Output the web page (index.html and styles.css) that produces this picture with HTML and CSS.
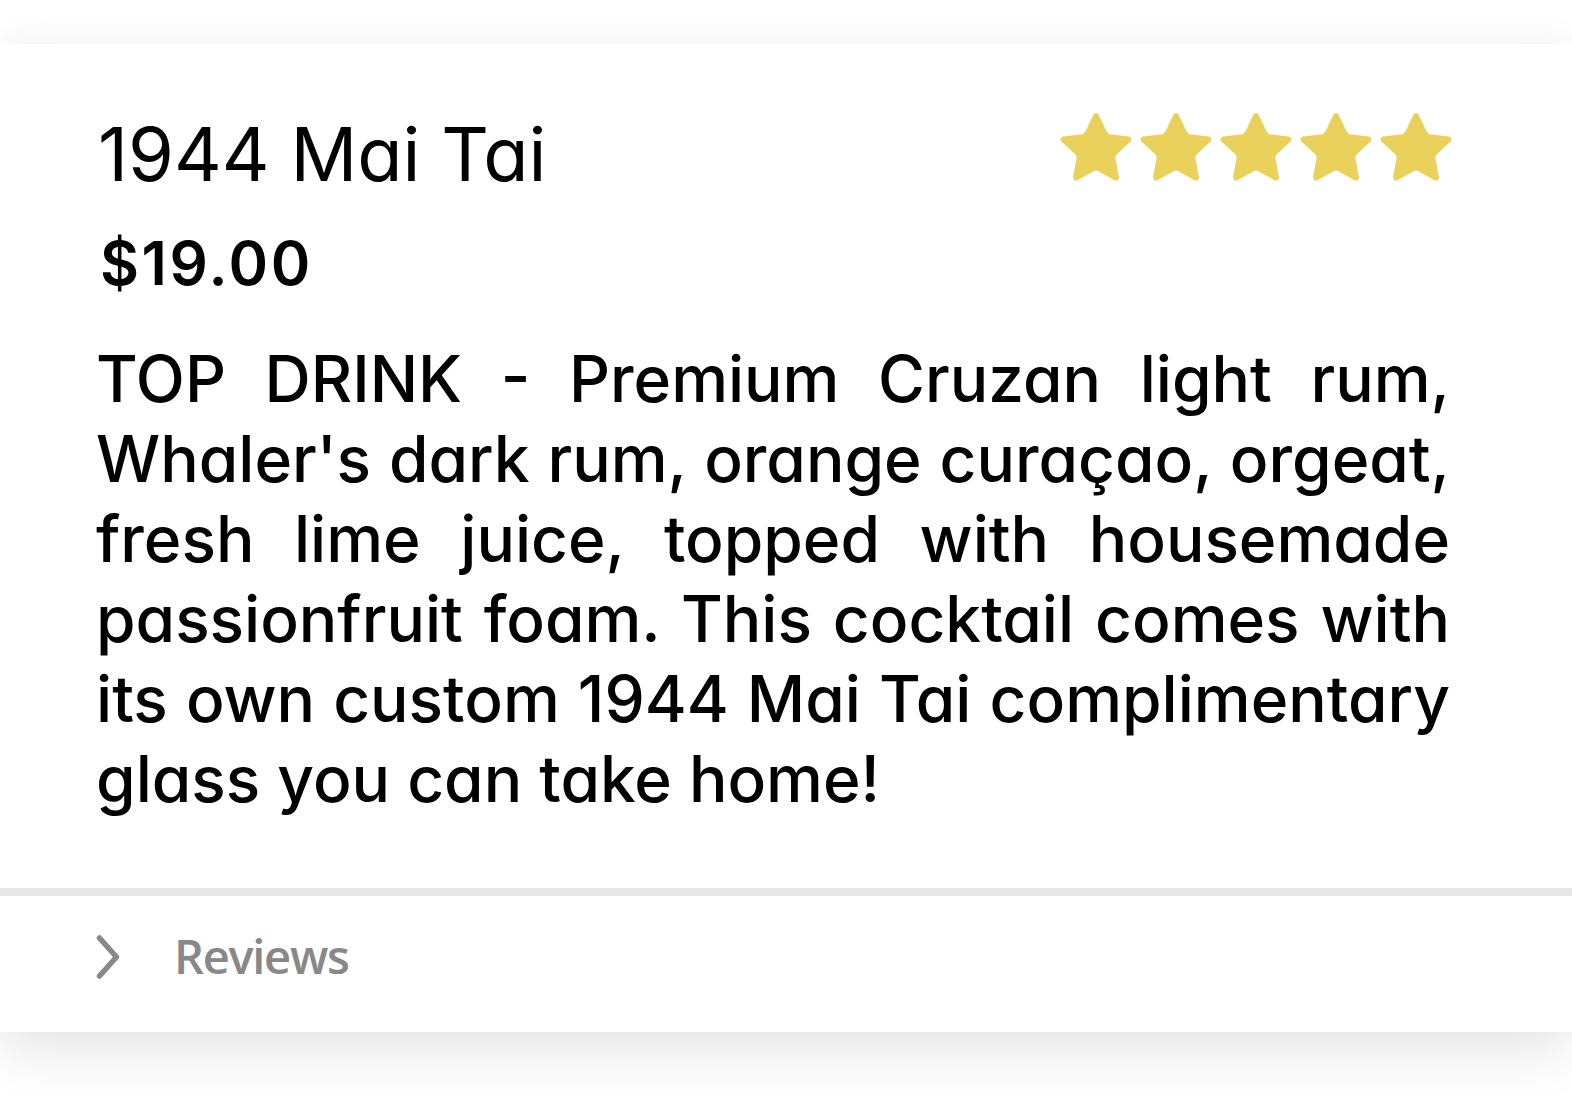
FILE: index.html
```html
<!DOCTYPE html>
<html lang="en">
<head>
<meta charset="utf-8">
<title>1944 Mai Tai</title>
<link rel="stylesheet" href="styles.css">
</head>
<body>
<div class="page">
  <article class="card">
    <div class="card-main">
      <div class="head">
        <h1 class="title">1944 Mai Tai</h1>
        <div class="stars" aria-label="5 out of 5 stars">
          <svg class="star" viewBox="0 0 72 68"><path d="M36 4L44 21.1Q45.7 24.7 49.7 25.2L68.3 27.5L54.6 40.4Q51.7 43.1 52.5 47L56 65.5L39.5 56.4Q36 54.5 32.5 56.4L16 65.5L19.5 47Q20.3 43.1 17.4 40.4L3.7 27.5L22.3 25.2Q26.3 24.7 28 21.1Z"/></svg>
          <svg class="star" viewBox="0 0 72 68"><path d="M36 4L44 21.1Q45.7 24.7 49.7 25.2L68.3 27.5L54.6 40.4Q51.7 43.1 52.5 47L56 65.5L39.5 56.4Q36 54.5 32.5 56.4L16 65.5L19.5 47Q20.3 43.1 17.4 40.4L3.7 27.5L22.3 25.2Q26.3 24.7 28 21.1Z"/></svg>
          <svg class="star" viewBox="0 0 72 68"><path d="M36 4L44 21.1Q45.7 24.7 49.7 25.2L68.3 27.5L54.6 40.4Q51.7 43.1 52.5 47L56 65.5L39.5 56.4Q36 54.5 32.5 56.4L16 65.5L19.5 47Q20.3 43.1 17.4 40.4L3.7 27.5L22.3 25.2Q26.3 24.7 28 21.1Z"/></svg>
          <svg class="star" viewBox="0 0 72 68"><path d="M36 4L44 21.1Q45.7 24.7 49.7 25.2L68.3 27.5L54.6 40.4Q51.7 43.1 52.5 47L56 65.5L39.5 56.4Q36 54.5 32.5 56.4L16 65.5L19.5 47Q20.3 43.1 17.4 40.4L3.7 27.5L22.3 25.2Q26.3 24.7 28 21.1Z"/></svg>
          <svg class="star" viewBox="0 0 72 68"><path d="M36 4L44 21.1Q45.7 24.7 49.7 25.2L68.3 27.5L54.6 40.4Q51.7 43.1 52.5 47L56 65.5L39.5 56.4Q36 54.5 32.5 56.4L16 65.5L19.5 47Q20.3 43.1 17.4 40.4L3.7 27.5L22.3 25.2Q26.3 24.7 28 21.1Z"/></svg>
        </div>
      </div>
      <div class="price">$19.00</div>
      <p class="desc">
        <span class="line">TOP DRINK - Premium Cruzan light rum,</span>
        <span class="line">Whaler's dark rum, orange curaçao, orgeat,</span>
        <span class="line">fresh lime juice, topped with housemade</span>
        <span class="line">passionfruit foam. This cocktail comes with</span>
        <span class="line">its own custom 1944 Mai Tai complimentary</span>
        <span class="line last">glass you can take home!</span>
      </p>
    </div>
    <div class="reviews">
      <svg class="chev" viewBox="0 0 24 44"><path d="M3.5 3 L20.5 22 L3.5 41"/></svg>
      <span class="reviews-label">Reviews</span>
    </div>
  </article>
</div>
</body>
</html>
```

FILE: styles.css
```css
html, body {
  margin: 0;
  padding: 0;
  background: #ffffff;
}

body {
  font-family: Inter, "Noto Sans", sans-serif;
  font-feature-settings: "cv11" 1;
  color: #000;
}

.page {
  padding-top: 44px;
  padding-bottom: 76px;
}

.card {
  background: #fff;
  box-shadow: 0 22px 50px rgba(0, 0, 0, 0.09), 0 -6px 40px rgba(0, 0, 0, 0.03);
}

.card-main {
  padding: 68px 122px 69px 96px;
}

.head {
  display: flex;
  justify-content: space-between;
  align-items: flex-start;
}

.title {
  margin: 0 0 0 2px;
  font-size: 74px;
  line-height: 84px;
  font-weight: 400;
  letter-spacing: 0;
}

.stars {
  display: flex;
  gap: 8px;
  margin-right: -2px;
}

.star {
  width: 72px;
  height: 68px;
  display: block;
  overflow: visible;
}

.star path {
  fill: #e9d15b;
  stroke: #e9d15b;
  stroke-width: 6;
  stroke-linejoin: round;
}

.price {
  margin: 32px 0 0 4px;
  font-size: 60px;
  line-height: 70px;
  font-weight: 600;
  letter-spacing: 2.5px;
}

.desc {
  margin: 41px 0 0;
  font-size: 64px;
  line-height: 80px;
  font-weight: 500;
}

.line {
  display: block;
  text-align: justify;
  text-align-last: justify;
  white-space: nowrap;
}

.line.last {
  text-align-last: left;
}

.reviews {
  border-top: 8px solid #e8e8e8;
  height: 136px;
  display: flex;
  align-items: center;
  padding-left: 96px;
}

.chev {
  width: 24px;
  height: 44px;
  display: block;
  margin-top: -14px;
}

.chev path {
  fill: none;
  stroke: #888;
  stroke-width: 5.5;
  stroke-linecap: round;
  stroke-linejoin: round;
}

.reviews-label {
  margin-left: 54px;
  font-family: "Open Sans", "Noto Sans", sans-serif;
  font-size: 47px;
  font-weight: 600;
  color: #888;
  letter-spacing: -1.3px;
  margin-top: -16px;
}
```
